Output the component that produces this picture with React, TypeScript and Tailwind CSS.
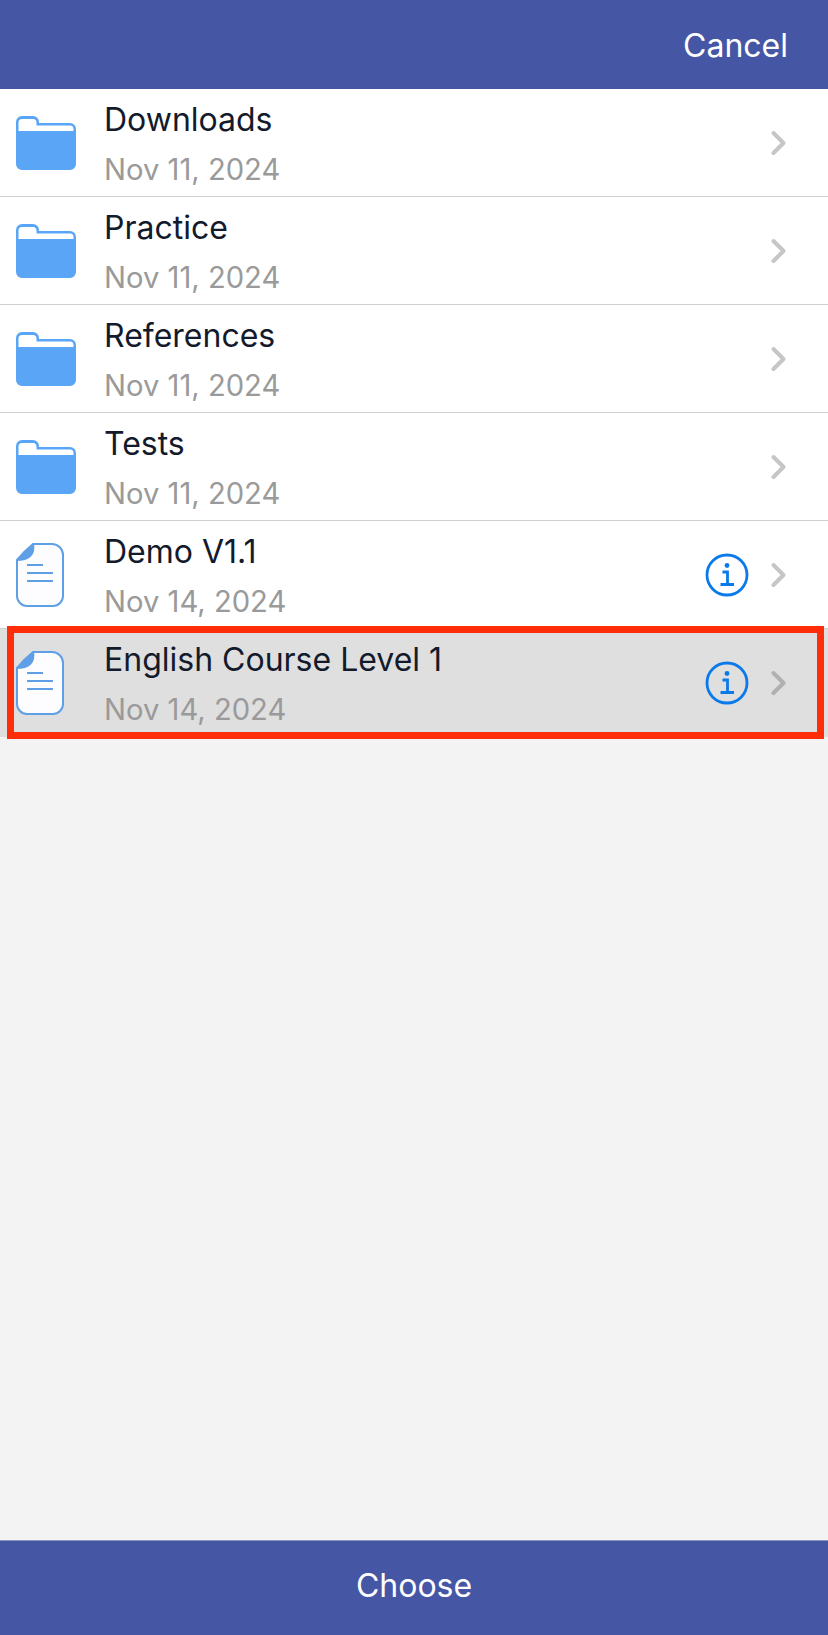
import React from 'react';

const FolderIcon = () => (
    <svg width="60" height="54" viewBox="0 0 60 54" fill="none">
        <path d="M0 6a6 6 0 0 1 6-6h11a6 6 0 0 1 6 6v1h31a6 6 0 0 1 6 6v35a6 6 0 0 1-6 6H6a6 6 0 0 1-6-6z" fill="#5aa5f6" />
        <path d="M2.500 15V6.500a3.500 3.500 0 0 1 3.500-3.500h11a3.500 3.500 0 0 1 3.500 3.500V9.500H54a3.500 3.500 0 0 1 3.500 3.500v2z" fill="#ffffff" />
    </svg>
);

const FileIcon = () => (
    <svg width="48" height="64" viewBox="0 0 48 64" fill="none">
        <path d="M17 1H36a11 11 0 0 1 11 11v41a10 10 0 0 1-10 10H11A10 10 0 0 1 1 53V17z" fill="#fdfdff" stroke="#5f9fe6" strokeWidth="2" />
        <path d="M18 0C20 12 14 18 0 18C4 11 10 5 18 0z" fill="#5f9fe6" />
        <path d="M11 22H27M11 30H37M11 38H37" stroke="#5f9fe6" strokeWidth="2" />
    </svg>
);

const InfoIcon = () => (
    <svg width="44" height="44" viewBox="0 0 44 44" fill="none">
        <circle cx="22" cy="22" r="20" stroke="#0a7aeb" strokeWidth="2.800" />
        <circle cx="22" cy="12.500" r="2.400" fill="#0a7aeb" />
        <path d="M17.500 19H22.500V31.500M15.500 31.500H29" stroke="#0a7aeb" strokeWidth="2.800" />
    </svg>
);

const Chevron = () => (
    <svg width="16" height="26" viewBox="0 0 16 26" fill="none">
        <path d="M2.500 3L12.500 13L2.500 23" stroke="currentColor" strokeWidth="4" strokeLinecap="round" strokeLinejoin="round" />
    </svg>
);

const rows = [
    { name: 'Downloads', date: 'Nov 11, 2024', type: 'folder' },
    { name: 'Practice', date: 'Nov 11, 2024', type: 'folder' },
    { name: 'References', date: 'Nov 11, 2024', type: 'folder' },
    { name: 'Tests', date: 'Nov 11, 2024', type: 'folder' },
    { name: 'Demo V1.1', date: 'Nov 14, 2024', type: 'file' },
    { name: 'English Course Level 1', date: 'Nov 14, 2024', type: 'file', selected: true },
];

const App: React.FC = () => {
    return (
        <div className="w-[828px] h-[1635px] flex flex-col bg-[#f3f3f3] font-['Inter',sans-serif]">
            <div className="h-[89px] shrink-0 bg-[#4556a4] flex items-center justify-end pr-[40px] pt-[2px] text-white text-[32px]">
                Cancel
            </div>
            <div className="flex-1">
                {rows.map(row => (
                    <div
                        key={row.name}
                        className={`relative h-[108px] flex items-center border-b ${row.selected ? 'bg-[#dfdfdf] border-transparent text-[#b0b0b0]' : 'bg-white border-[#cfcfcf] text-[#c6c6c6]'}`}
                    >
                        <div className={`shrink-0 w-[104px] pl-[16px] flex justify-start ${row.type === 'folder' ? 'pt-0' : 'pt-[1px]'}`}>
                            {row.type === 'folder' ? <FolderIcon /> : <FileIcon />}
                        </div>
                        <div className="flex-1 flex flex-col pt-[3px]">
                            <div className="text-[32px] leading-[38px] text-[#131a2b]">{row.name}</div>
                            <div className="text-[29.2px] leading-[36px] mt-[13px] text-[#9a9a9a]">{row.date}</div>
                        </div>
                        {row.type === 'file' && (
                            <div className="mr-[22px]">
                                <InfoIcon />
                            </div>
                        )}
                        <div className="mr-[41px]">
                            <Chevron />
                        </div>
                        {row.selected && (
                            <div className="absolute left-[7px] right-[4px] top-[-3px] bottom-[-3px] border-[7px] border-[#ff2d08]" />
                        )}
                    </div>
                ))}
            </div>
            <div className="h-[95px] shrink-0 bg-[#4556a4] border-t border-[#8f96bd] flex items-center justify-center pb-[4px] text-white text-[32px]">
                Choose
            </div>
        </div>
    );
};

export default App;
